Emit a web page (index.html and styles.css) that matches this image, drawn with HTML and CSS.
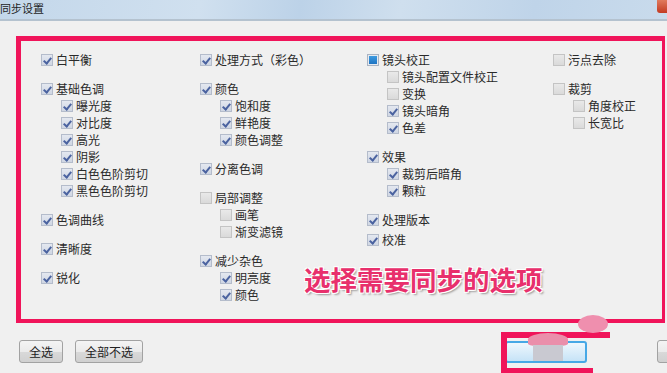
FILE: index.html
```html
<!DOCTYPE html>
<html lang="zh-CN">
<head>
  <meta charset="UTF-8">
  <title>同步设置</title>
  <link rel="stylesheet" href="styles.css">
</head>
<body>
  <div class="window">
    <div class="titlebar">
      <span class="title">同步设置</span>
      <span class="close"></span>
    </div>

    <div class="content">
      <div class="frame">
        <div class="col">
          <div class="group">
            <label class="item"><span class="box on"></span>白平衡</label>
          </div>
          <div class="group">
            <label class="item"><span class="box on"></span>基础色调</label>
            <label class="item sub"><span class="box on"></span>曝光度</label>
            <label class="item sub"><span class="box on"></span>对比度</label>
            <label class="item sub"><span class="box on"></span>高光</label>
            <label class="item sub"><span class="box on"></span>阴影</label>
            <label class="item sub"><span class="box on"></span>白色色阶剪切</label>
            <label class="item sub"><span class="box on"></span>黑色色阶剪切</label>
          </div>
          <div class="group">
            <label class="item"><span class="box on"></span>色调曲线</label>
          </div>
          <div class="group">
            <label class="item"><span class="box on"></span>清晰度</label>
          </div>
          <div class="group">
            <label class="item"><span class="box on"></span>锐化</label>
          </div>
        </div>

        <div class="col">
          <div class="group">
            <label class="item"><span class="box on"></span>处理方式（彩色）</label>
          </div>
          <div class="group">
            <label class="item"><span class="box on"></span>颜色</label>
            <label class="item sub"><span class="box on"></span>饱和度</label>
            <label class="item sub"><span class="box on"></span>鲜艳度</label>
            <label class="item sub"><span class="box on"></span>颜色调整</label>
          </div>
          <div class="group">
            <label class="item"><span class="box on"></span>分离色调</label>
          </div>
          <div class="group">
            <label class="item"><span class="box"></span>局部调整</label>
            <label class="item sub"><span class="box"></span>画笔</label>
            <label class="item sub"><span class="box"></span>渐变滤镜</label>
          </div>
          <div class="group">
            <label class="item"><span class="box on"></span>减少杂色</label>
            <label class="item sub"><span class="box on"></span>明亮度</label>
            <label class="item sub"><span class="box on"></span>颜色</label>
          </div>
        </div>

        <div class="col">
          <div class="group">
            <label class="item"><span class="box part"></span>镜头校正</label>
            <label class="item sub"><span class="box"></span>镜头配置文件校正</label>
            <label class="item sub"><span class="box"></span>变换</label>
            <label class="item sub"><span class="box on"></span>镜头暗角</label>
            <label class="item sub"><span class="box on"></span>色差</label>
          </div>
          <div class="group">
            <label class="item"><span class="box on"></span>效果</label>
            <label class="item sub"><span class="box on"></span>裁剪后暗角</label>
            <label class="item sub"><span class="box on"></span>颗粒</label>
          </div>
          <div class="group">
            <label class="item"><span class="box on"></span>处理版本</label>
            <label class="item tight"><span class="box on"></span>校准</label>
          </div>
        </div>

        <div class="col">
          <div class="group">
            <label class="item"><span class="box"></span>污点去除</label>
          </div>
          <div class="group">
            <label class="item"><span class="box"></span>裁剪</label>
            <label class="item sub"><span class="box"></span>角度校正</label>
            <label class="item sub"><span class="box"></span>长宽比</label>
          </div>
        </div>

        <div class="note">选择需要同步的选项</div>
      </div>

      <div class="actions">
        <button class="btn">全选</button>
        <button class="btn">全部不选</button>
        <button class="btn primary">同步</button>
        <button class="btn cancel"></button>
      </div>
    </div>

    <!-- hand-drawn marks over the button -->
    <div class="mark-rect"></div>
    <div class="mark-dot"></div>
    <div class="mark-blob"></div>
  </div>
</body>
</html>
```

FILE: styles.css
```css
* {
  margin: 0;
  padding: 0;
  box-sizing: border-box;
}

body {
  width: 667px;
  height: 373px;
  overflow: hidden;
  background: #f0f0f0;
  font-family: "Noto Sans CJK SC", "Noto Sans", sans-serif;
  color: #2a2a2a;
}

.window {
  position: relative;
  width: 667px;
  height: 373px;
}

.titlebar {
  height: 21px;
  display: flex;
  justify-content: space-between;
  align-items: flex-start;
  background: linear-gradient(100deg, #c3d7ea 0%, #d0e0ef 30%, #bcd2e8 45%, #cfdfee 60%, #bfd4e9 80%, #c9dbec 100%);
  border-bottom: 2px solid #b4c2cf;
}

.title {
  font-size: 11px;
  line-height: 17px;
  color: #1e1e1e;
}

.close {
  width: 14px;
  height: 13px;
  margin-right: -4px;
  background: linear-gradient(#e07a5e, #c33a22);
  border-radius: 0 0 3px 3px;
}

.content {
  padding: 15px 2px 0 16px;
}

.frame {
  position: relative;
  height: 287px;
  border: 5px solid #f0145a;
  border-right-width: 3px;
  border-bottom-width: 4px;
  padding: 10px 0 0 20px;
  display: grid;
  grid-template-columns: 159px 167px 186px 1fr;
}

.group {
  margin-bottom: 12px;
}

.item {
  display: flex;
  align-items: center;
  height: 17px;
  font-size: 12px;
  line-height: 17px;
  white-space: nowrap;
}

.item.sub {
  padding-left: 20px;
}

.item.tight {
  margin-top: 3px;
}

.box {
  position: relative;
  flex: none;
  width: 12px;
  height: 12px;
  margin-right: 3px;
  border: 1px solid #c4c4c4;
  background: linear-gradient(#e9e9e9, #dadada);
}

.box.on {
  border-color: #b4bccb;
  background: linear-gradient(#e4e8f0, #cfd6e3);
}

.box.on::after {
  content: "";
  position: absolute;
  left: 3px;
  top: 1px;
  width: 3px;
  height: 6px;
  border-right: 2px solid #4b63a0;
  border-bottom: 2px solid #4b63a0;
  transform: rotate(40deg);
}

.box.part {
  border-color: #a9b3c2;
  background: #e6eaf0;
}

.box.part::after {
  content: "";
  position: absolute;
  inset: 1px;
  background: linear-gradient(#3d9be0, #1f74c2);
}

.note {
  position: absolute;
  left: 283px;
  top: 222px;
  font-size: 26.5px;
  font-weight: 700;
  line-height: 32px;
  color: #e8306c;
  text-shadow: 1px 1px 0 #fff, -1px -1px 0 #fff, 1px -1px 0 #fff, -1px 1px 0 #fff, 2px 2px 2px #9a9a9a;
}

.actions {
  display: flex;
  align-items: center;
  margin-top: 17px;
  margin-left: 3px;
}

.btn {
  height: 23px;
  padding: 0 9px;
  font-family: inherit;
  font-size: 12px;
  color: #222;
  border: 1px solid #a2a2a2;
  border-radius: 3px;
  background: linear-gradient(#f4f4f4 0%, #ebebeb 50%, #d9d9d9 51%, #d0d0d0 100%);
  flex: none;
}

.btn + .btn {
  margin-left: 12px;
}

.btn.primary {
  margin-left: 362px;
  width: 82px;
  height: 22px;
  border: 2px solid #46a8e6;
  background: linear-gradient(#eef7fd, #c6e3f7);
}

.btn.cancel {
  margin-left: 70px;
  width: 80px;
}

.mark-rect {
  position: absolute;
  left: 501px;
  top: 332px;
  width: 92px;
  height: 41px;
  border: 6px solid #f0145a;
  border-right: none;
  border-bottom-width: 5px;
}

.mark-rect::after {
  content: "";
  position: absolute;
  left: 86px;
  top: -6px;
  width: 17px;
  height: 6px;
  background: #f0145a;
}

.mark-dot {
  position: absolute;
  left: 578px;
  top: 315px;
  width: 30px;
  height: 18px;
  border-radius: 50%;
  background: #ef8fae;
}

.mark-blob {
  position: absolute;
  left: 528px;
  top: 333px;
  width: 40px;
  height: 13px;
  border-radius: 50% 50% 20% 20%;
  background: #ea8fab;
}

.mark-blob::after {
  content: "";
  position: absolute;
  left: 5px;
  top: 12px;
  width: 30px;
  height: 16px;
  background: #c9c9d1;
}
```
